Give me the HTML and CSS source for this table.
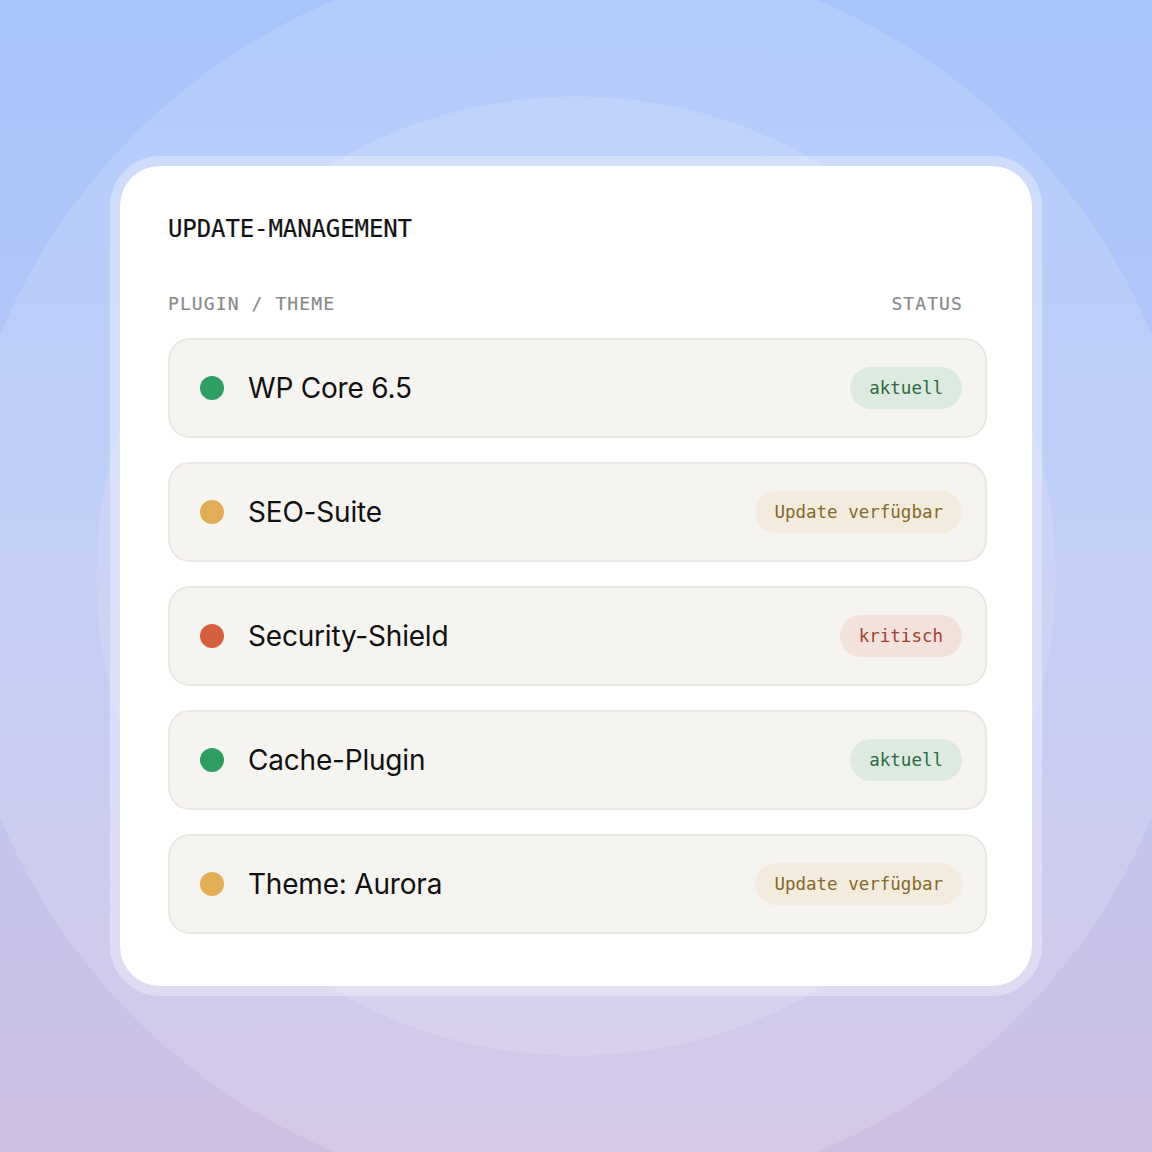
FILE: index.html
```html
<!DOCTYPE html>
<html lang="de">
<head>
<meta charset="utf-8">
<title>Update-Management</title>
<link rel="stylesheet" href="styles.css">
</head>
<body>
<div class="frame">
  <section class="card">
    <h1 class="title">UPDATE-MANAGEMENT</h1>
    <div class="head">
      <span>PLUGIN / THEME</span>
      <span>STATUS</span>
    </div>
    <ul class="rows">
      <li class="row"><span class="dot ok"></span><span class="name">WP Core 6.5</span><span class="badge ok">aktuell</span></li>
      <li class="row"><span class="dot warn"></span><span class="name">SEO-Suite</span><span class="badge warn">Update verfügbar</span></li>
      <li class="row"><span class="dot crit"></span><span class="name">Security-Shield</span><span class="badge crit">kritisch</span></li>
      <li class="row"><span class="dot ok"></span><span class="name">Cache-Plugin</span><span class="badge ok">aktuell</span></li>
      <li class="row"><span class="dot warn"></span><span class="name">Theme: Aurora</span><span class="badge warn">Update verfügbar</span></li>
    </ul>
  </section>
</div>
</body>
</html>
```

FILE: styles.css
```css
* { box-sizing: border-box; }
html, body { margin: 0; padding: 0; }
body {
  width: 1152px;
  height: 1152px;
  display: flex;
  align-items: center;
  justify-content: center;
  background:
    radial-gradient(circle 480px at 576px 576px, rgba(255,255,255,0.13) 99.8%, rgba(255,255,255,0) 100%),
    radial-gradient(circle 625px at 576px 576px, rgba(255,255,255,0.13) 99.8%, rgba(255,255,255,0) 100%),
    linear-gradient(180deg, #a7c4fb 0%, #b8c8f6 45%, #cfc0e3 100%);
  font-family: "Inter", "Liberation Sans", sans-serif;
}
.frame {
  padding: 10px;
  border-radius: 50px;
  background: rgba(255,255,255,0.32);
}
.card {
  width: 912px;
  height: 820px;
  background: #ffffff;
  border-radius: 40px;
  padding: 48px 45px 48px 48px;
}
.title {
  margin: 0;
  font-family: "DejaVu Sans Mono", "Liberation Mono", monospace;
  font-weight: 400;
  font-size: 24px;
  line-height: 30px;
  color: #121212;
  letter-spacing: -0.1px;
  -webkit-text-stroke: 0.2px #121212;
}
.head {
  display: flex;
  justify-content: space-between;
  margin-top: 48px;
  padding-right: 24px;
  font-family: "DejaVu Sans Mono", "Liberation Mono", monospace;
  font-size: 18px;
  line-height: 24px;
  letter-spacing: 1.1px;
  color: #8a8a8a;
  -webkit-text-stroke: 0.2px #8a8a8a;
}
.rows {
  list-style: none;
  margin: 22px 0 0 0;
  padding: 0;
  display: flex;
  flex-direction: column;
  gap: 24px;
}
.row {
  height: 100px;
  display: flex;
  align-items: center;
  padding: 0 23px 0 30px;
  background: #f6f4f0;
  border: 2px solid #ebe8e3;
  border-radius: 22px;
}
.dot {
  width: 24px;
  height: 24px;
  border-radius: 50%;
  flex: none;
}
.dot.ok { background: #2f9e62; }
.dot.warn { background: #e1ae56; }
.dot.crit { background: #d5603f; }
.name {
  margin-left: 24px;
  flex: 1;
  font-size: 28px;
  color: #111111;
  letter-spacing: -0.2px;
}
.badge {
  height: 42px;
  display: flex;
  align-items: center;
  padding: 0 19px;
  border-radius: 21px;
  font-family: "DejaVu Sans Mono", "Liberation Mono", monospace;
  font-size: 17.5px;
}
.badge.ok { background: #ddeadf; color: #2d6a45; }
.badge.warn { background: #f3ebdd; color: #86682b; }
.badge.crit { background: #f3e1dc; color: #a3412d; }
```
